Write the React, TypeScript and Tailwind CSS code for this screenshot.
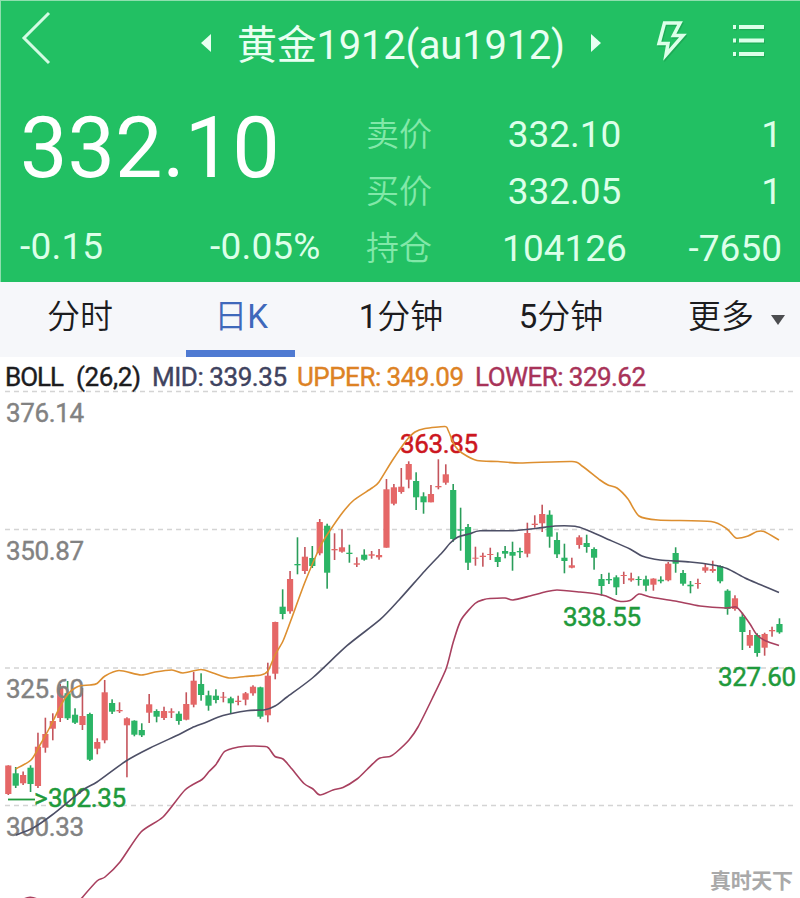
/**
 * Futures quote screen
 *
 * Green quote header, period tabs and a daily candlestick chart
 * with Bollinger bands for a single contract.
 */

type Point = [number, number];

/** colour, high, body top, body bottom, low (chart y units) */
type Candle = ['r' | 'g', number, number, number, number];

const FIRST_X = 8.3;
const STEP = 7.415;

const candles: Candle[] = [
  ['r', 765.3, 765.5, 794, 795],
  ['g', 767, 773.3, 785.7, 788],
  ['r', 771.5, 775, 783.3, 785],
  ['g', 765.3, 767.7, 784, 792],
  ['r', 732.7, 746.7, 786, 788],
  ['r', 717.7, 734, 747.7, 752.7],
  ['r', 713.3, 721, 728.7, 740.3],
  ['r', 684, 688, 718, 722],
  ['g', 681, 693.3, 718.3, 720],
  ['g', 708.3, 714.7, 722.7, 724],
  ['r', 688, 716, 725, 730],
  ['g', 712.7, 714, 759.7, 761],
  ['r', 738.3, 742, 748.7, 754.3],
  ['r', 680, 692.3, 740.3, 743.3],
  ['g', 699.3, 703, 711.7, 714],
  ['r', 702.3, 710, 711.3, 713],
  ['r', 717.3, 718.3, 725.3, 777.3],
  ['g', 720.3, 720.7, 734.7, 736.3],
  ['g', 723.3, 730, 735.3, 737],
  ['r', 694, 704.3, 712.7, 723],
  ['g', 709.3, 711, 716.7, 722.3],
  ['r', 706.7, 711, 718, 720],
  ['r', 708.3, 711.3, 712.7, 718],
  ['g', 711.3, 713.7, 721, 724.7],
  ['r', 692.3, 704, 719.7, 720.3],
  ['r', 672, 680.7, 704.7, 707.3],
  ['g', 673.3, 684, 695, 700.7],
  ['g', 690.7, 695.3, 705.7, 710.7],
  ['g', 689.3, 695.7, 700, 703.3],
  ['r', 692, 696.7, 697.7, 702.3],
  ['g', 696.7, 698.3, 703.3, 713.3],
  ['r', 695.7, 700.7, 702, 705.3],
  ['r', 692, 693.3, 699.7, 705.3],
  ['r', 685.3, 686.7, 693.3, 695.7],
  ['g', 686.7, 687.3, 716.7, 718.7],
  ['r', 662.7, 675.7, 715.3, 722.3],
  ['r', 621.7, 622, 673.7, 679.3],
  ['g', 589.3, 606.7, 614, 619.3],
  ['r', 571, 579, 611.3, 613.7],
  ['g', 537.3, 564, 565.3, 574.3],
  ['r', 547, 556.7, 571, 574],
  ['g', 546, 558, 566, 568],
  ['r', 519, 522, 553.3, 555.3],
  ['g', 523.7, 525.7, 572.7, 588.7],
  ['r', 533.3, 549, 550.3, 560],
  ['r', 529.3, 547.3, 551.7, 552.7],
  ['g', 544.7, 552.7, 554, 562.7],
  ['r', 557.3, 563.3, 564.7, 567],
  ['g', 549.3, 554.7, 559.7, 560.7],
  ['r', 551, 554.3, 555.7, 558.7],
  ['r', 549, 555, 557.3, 559.7],
  ['r', 479, 489.3, 547.7, 547.7],
  ['r', 484, 487.3, 503.7, 505.3],
  ['r', 468, 486.7, 492, 493.7],
  ['r', 461.3, 464, 479.7, 488.3],
  ['g', 472.3, 481, 497.3, 510],
  ['g', 492.3, 496.3, 502.3, 513.7],
  ['r', 485, 494, 502.3, 502.3],
  ['r', 459.3, 486, 487.3, 489.3],
  ['r', 464.3, 474.3, 482.7, 484.7],
  ['g', 484, 490, 539, 541.7],
  ['g', 507.7, 529.3, 530.7, 550.7],
  ['g', 524, 527, 562.7, 570],
  ['r', 546.7, 557.7, 558.7, 565.7],
  ['r', 552.7, 555.7, 557, 566.7],
  ['r', 547.7, 554, 555, 560],
  ['g', 552.3, 557, 562, 567],
  ['g', 546, 551, 553.7, 558.3],
  ['g', 541.7, 552, 555.7, 570.7],
  ['g', 547.7, 551, 552.3, 558],
  ['r', 522.7, 533, 553.7, 557.3],
  ['r', 515.3, 523.7, 525, 527.7],
  ['r', 504.7, 514, 523.3, 532],
  ['g', 510.3, 514.7, 536.7, 547.7],
  ['g', 532.3, 540, 554.3, 558],
  ['g', 543.7, 557.7, 561, 573.3],
  ['r', 557.7, 565.3, 567.7, 568.3],
  ['r', 535.3, 537.3, 545, 548.7],
  ['g', 534.7, 543, 547, 552.7],
  ['g', 547.3, 549, 557.7, 569.7],
  ['g', 574, 579, 586, 595.7],
  ['g', 572.7, 579, 580.3, 584],
  ['g', 575.3, 577.3, 587.3, 595],
  ['r', 571.7, 575, 576, 584],
  ['r', 572.7, 578.3, 580.3, 581.7],
  ['g', 576.3, 579, 580, 585.7],
  ['g', 575.7, 579.3, 585.7, 591.3],
  ['r', 578.3, 578.6, 584.7, 590.7],
  ['g', 576.3, 579.7, 581.3, 583.3],
  ['r', 562, 563.7, 580.3, 581.3],
  ['g', 547.3, 553, 563.7, 572.7],
  ['g', 570, 573, 583.7, 585.7],
  ['g', 581, 584.7, 586.3, 593.3],
  ['r', 578.7, 583, 584, 588.7],
  ['r', 563.3, 567.3, 570.7, 572.7],
  ['r', 560.7, 569, 571, 572.7],
  ['g', 565.3, 566, 581.3, 583.3],
  ['g', 589.3, 590.7, 609, 614.7],
  ['r', 595.3, 598.3, 609, 610.7],
  ['g', 612.7, 616.7, 632, 650],
  ['r', 630, 635, 645.7, 648],
  ['g', 633.3, 635, 653, 656.7],
  ['r', 632.7, 634, 647.7, 655.7],
  ['r', 626.7, 630, 631.3, 636.7],
  ['g', 618.3, 624, 632.3, 633.7],
];

const upper: Point[] = [
  [15.5, 769], [31, 760], [40, 745], [50, 727], [60, 707], [68, 694], [75, 688], [81, 685.5],
  [90, 685], [97, 683.5], [105, 676], [119, 670.5], [141, 675], [155, 672], [172, 670],
  [183, 673], [201, 669.5], [213, 673], [229, 678], [245, 676.5], [261, 675], [268, 671],
  [275, 655], [283, 641], [291, 620], [305, 582], [320, 547], [329, 532], [343, 512],
  [354, 500], [372, 488], [379, 482], [392, 461], [406, 441], [415, 432], [425, 428.5],
  [445, 426.5], [448, 430], [455, 446], [462, 453], [477, 460.5], [498, 461.5], [520, 463],
  [572, 461.5], [582, 466], [600, 480], [608, 485], [617, 488], [628, 499], [639, 516],
  [658, 520], [711, 521.5], [727, 529], [736, 538], [748, 536], [757, 531.5], [764, 531.5],
  [779, 540],
];

const mid: Point[] = [
  [16, 835], [33, 828], [52, 815], [83, 790], [97, 782], [126, 761], [150, 748], [180, 734],
  [192, 727.7], [205, 722.7], [223, 715.5], [247, 710.7], [265, 709.7], [275, 706],
  [287, 697], [313, 677.5], [347, 645.7], [380, 619.7], [399, 600], [425, 570.7],
  [442, 552.7], [450, 543.3], [458, 537], [470, 533.7], [480, 530.7], [513, 530.7],
  [537, 528.3], [555, 526], [575, 526.3], [587, 530], [605, 538], [630, 549], [642, 556],
  [660, 560], [690, 562], [713, 565], [727, 568.5], [745, 578], [760, 584.5], [779, 592.5],
];

const lower: Point[] = [
  [80, 900], [97, 881], [105, 877], [120, 862], [141, 832], [163, 817], [185, 790],
  [202, 779.5], [209, 771.5], [216, 764.5], [224, 752], [232, 748.5], [245, 746.3],
  [265, 746.5], [269, 748.5], [275, 756.5], [283, 759], [292, 769], [304, 783.5],
  [313, 789], [320, 795], [333, 790], [343, 787.5], [357, 779], [367, 769.5], [379, 758.5],
  [390, 756.5], [396, 752.5], [409, 740], [418, 727], [432, 699], [446, 669], [453, 643],
  [461, 620], [475, 603.5], [484, 599.5], [490, 598.5], [505, 598], [513, 600], [530, 596],
  [545, 592], [557, 590], [580, 592], [597, 594], [606, 596], [618, 601], [630, 600.5],
  [639, 594], [650, 597], [675, 601], [700, 606], [726, 608], [736, 607], [742, 613],
  [750, 624], [757, 635], [766, 641], [779, 645.5],
];

const gridLines = [391.5, 529.5, 668, 805.5];

const legend = [
  { x: 5, width: 59, text: 'BOLL', fill: '#1c1c1e' },
  { x: 76, width: 65, text: '(26,2)', fill: '#1c1c1e' },
  { x: 152, width: 135, text: 'MID: 339.35', fill: '#3f4360' },
  { x: 297, width: 167, text: 'UPPER: 349.09', fill: '#dd8224' },
  { x: 475, width: 171, text: 'LOWER: 329.62', fill: '#a83359' },
];

const axisLabels = [
  { y: 422, text: '376.14' },
  { y: 560, text: '350.87' },
  { y: 698, text: '325.60' },
  { y: 836, text: '300.33' },
];

/** Highest and lowest prices called out on the chart */
const marks = [
  { x: 400, y: 453, text: '363.85', fill: '#cc1620' },
  { x: 563, y: 626, text: '338.55', fill: '#1f9a3c' },
  { x: 718, y: 686, text: '327.60', fill: '#1f9a3c' },
  { x: 48, y: 807, text: '302.35', fill: '#1f9a3c' },
];

const quotes = [
  { label: '卖价', value: '332.10', change: '1' },
  { label: '买价', value: '332.05', change: '1' },
  { label: '持仓', value: '104126', change: '-7650' },
];

/** Turns a list of points into a smooth cubic path */
function smoothPath(points: Point[]): string {
  let d = `M${points[0][0]} ${points[0][1]}`;
  for (let i = 0; i < points.length - 1; i++) {
    const p0 = points[i - 1] ?? points[i];
    const p1 = points[i];
    const p2 = points[i + 1];
    const p3 = points[i + 2] ?? p2;
    const k = 8;
    d += ` C${p1[0] + (p2[0] - p0[0]) / k} ${p1[1] + (p2[1] - p0[1]) / k}`;
    d += ` ${p2[0] - (p3[0] - p1[0]) / k} ${p2[1] - (p3[1] - p1[1]) / k} ${p2[0]} ${p2[1]}`;
  }
  return d;
}

function TitleBar() {
  return (
    <div className="flex h-[88px] items-start text-[#e9fff2]">
      <svg className="ml-5 mt-[9px] h-14 w-8 shrink-0" viewBox="0 0 32 56" fill="none" aria-hidden="true">
        <path d="M28 3 3 28 28 53" stroke="#d3fbe3" strokeWidth="3" />
      </svg>
      <svg className="ml-[148px] mt-[33px] h-[18px] w-[10px] shrink-0" viewBox="0 0 10 18" fill="currentColor" aria-hidden="true">
        <path d="M10 0v18L0 9z" />
      </svg>
      <h1 className="ml-[26px] mt-[19px] w-[330px] whitespace-nowrap text-[40px] leading-[52px] font-normal tracking-[-0.25px]">
        黄金1912(au1912)
      </h1>
      <svg className="ml-[24px] mt-[33px] h-[18px] w-[10px] shrink-0" viewBox="0 0 10 18" fill="currentColor" aria-hidden="true">
        <path d="M0 0v18l10-9z" />
      </svg>
      <svg className="ml-[54px] mt-[17px] h-[44px] w-[32px] shrink-0" viewBox="0 0 32 44" fill="none" aria-hidden="true">
        <path d="M9.500 5H25L18.500 17.500H28L11 37L13 25.500H4Z" stroke="#18964a" strokeOpacity="0.5" strokeWidth="3.500" transform="translate(1 1.5)" />
        <path d="M9.500 5H25L18.500 17.500H28L11 37L13 25.500H4Z" stroke="#dcffe9" strokeWidth="3.500" />
      </svg>
      <svg className="ml-[44px] mt-[21px] h-[38px] w-[34px] shrink-0" viewBox="0 0 34 38" fill="none" aria-hidden="true">
        <path d="M3 6.5h3M9 6.5h25M3 20h3M9 20h25M3 33.500h3M9 33.500h25" stroke="#18964a" strokeOpacity="0.5" strokeWidth="3.600" />
        <path d="M2 5h3M8 5h25M2 18.500h3M8 18.500h25M2 32h3M8 32h25" stroke="#dcffe9" strokeWidth="4" />
      </svg>
    </div>
  );
}

function QuoteHeader() {
  return (
    <header className="h-[282px] border-t border-l border-[#8fdfae] bg-[#22c063]">
      <TitleBar />
      <div className="flex pt-px text-[37px] text-[#dcffe9]">
        <div className="w-[347px] shrink-0 pl-[19px]">
          <div className="h-[128px] text-[84.5px] leading-[118px] text-white">332.10</div>
          <div className="flex leading-[57px] tracking-[0.2px]">
            <span className="w-[190px]">-0.15</span>
            <span>-0.05%</span>
          </div>
        </div>
        <div className="grid grow auto-rows-[57px] grid-cols-[110px_175px_1fr] pt-[16px] pl-[18px] leading-[57px]">
          {quotes.map((row) => (
            <div key={row.label} className="contents">
              <span className="text-[33px] font-[350] text-[#82e8a9]">{row.label}</span>
              <span className="pl-[2px] text-center">{row.value}</span>
              <span className="pr-[18px] text-right">{row.change}</span>
            </div>
          ))}
        </div>
      </div>
    </header>
  );
}

function PeriodTabs() {
  return (
    <nav className="flex h-[75px] bg-[#f6f7fa] text-[33px] leading-[70px] font-[350] text-[#1c1c1e]">
      <span className="w-[160px] text-center">分时</span>
      <span className="relative w-[162px] text-center text-[#3f68bb]">
        日<span className="font-normal">K</span>
        <span className="absolute bottom-0 left-[26px] h-[7px] w-[109px] bg-[#4f7ad2]" />
      </span>
      <span className="w-[158px] text-center">
        <span className="font-normal">1</span>分钟
      </span>
      <span className="w-[162px] text-center">
        <span className="font-normal">5</span>分钟
      </span>
      <span className="flex grow pl-[46px]">
        <span className="whitespace-nowrap">更多</span>
        <svg className="mt-[33px] ml-[17px] h-[10px] w-[14px]" viewBox="0 0 14 10" fill="#4c4d50" aria-hidden="true">
          <path d="M0 0h14L7 10z" />
        </svg>
      </span>
    </nav>
  );
}

function Chart() {
  return (
    <svg
      className="block h-[541px] w-[800px]"
      viewBox="0 357 800 541"
      fontFamily='Roboto, "Noto Sans CJK SC", sans-serif'
      fontSize="26"
    >
      <g stroke="#d4d4d4" strokeWidth="1.3" strokeDasharray="5 4">
        {gridLines.map((y) => (
          <line key={y} x1="5" x2="795" y1={y} y2={y} />
        ))}
      </g>

      {/* Indicator legend */}
      {legend.map((item) => (
        <text key={item.text} x={item.x} y="386" fill={item.fill} stroke={item.fill} strokeWidth="0.4" textLength={item.width}>
          {item.text}
        </text>
      ))}

      {candles.map(([color, high, top, bottom, low], i) => {
        const x = FIRST_X + i * STEP;
        return (
          <g key={i} fill={color === 'r' ? '#e56767' : '#2bb566'}>
            <rect x={x - 0.8} y={high} width="1.6" height={low - high} fill={color === 'r' ? '#c4545c' : '#2a9d5a'} />
            <rect x={x - 3.1} y={top} width="6.2" height={bottom - top} />
          </g>
        );
      })}

      {axisLabels.map((label) => (
        <text key={label.text} x="6" y={label.y} fill="#828282" stroke="#828282" strokeWidth="0.4" textLength="78">
          {label.text}
        </text>
      ))}

      {marks.map((mark) => (
        <text key={mark.text} x={mark.x} y={mark.y} fill={mark.fill} stroke={mark.fill} strokeWidth="0.5" textLength="78">
          {mark.text}
        </text>
      ))}
      <text x="34" y="807" fill="#1f9a3c" stroke="#1f9a3c" strokeWidth="0.5">&gt;</text>
      <path d="M8 799.500h27" stroke="#1f9a3c" strokeWidth="1.800" />

      <g fill="none" strokeWidth="1.6" strokeLinejoin="round">
        <path d={smoothPath(upper)} stroke="#dd8f30" />
        <path d={smoothPath(mid)} stroke="#4d4f66" />
        <path d={smoothPath(lower)} stroke="#a8405f" />
        <path d="M24 899Q30 895.500 37 899" stroke="#a8405f" />
      </g>

      <text x="710" y="888" fill="#a9a9a9" fontSize="21" fontWeight="700" textLength="83">真时天下</text>
    </svg>
  );
}

export default function App() {
  return (
    <main className='h-[898px] w-[800px] overflow-hidden bg-white font-[Roboto,"Noto_Sans_CJK_SC",sans-serif]'>
      <QuoteHeader />
      <PeriodTabs />
      <Chart />
    </main>
  );
}
